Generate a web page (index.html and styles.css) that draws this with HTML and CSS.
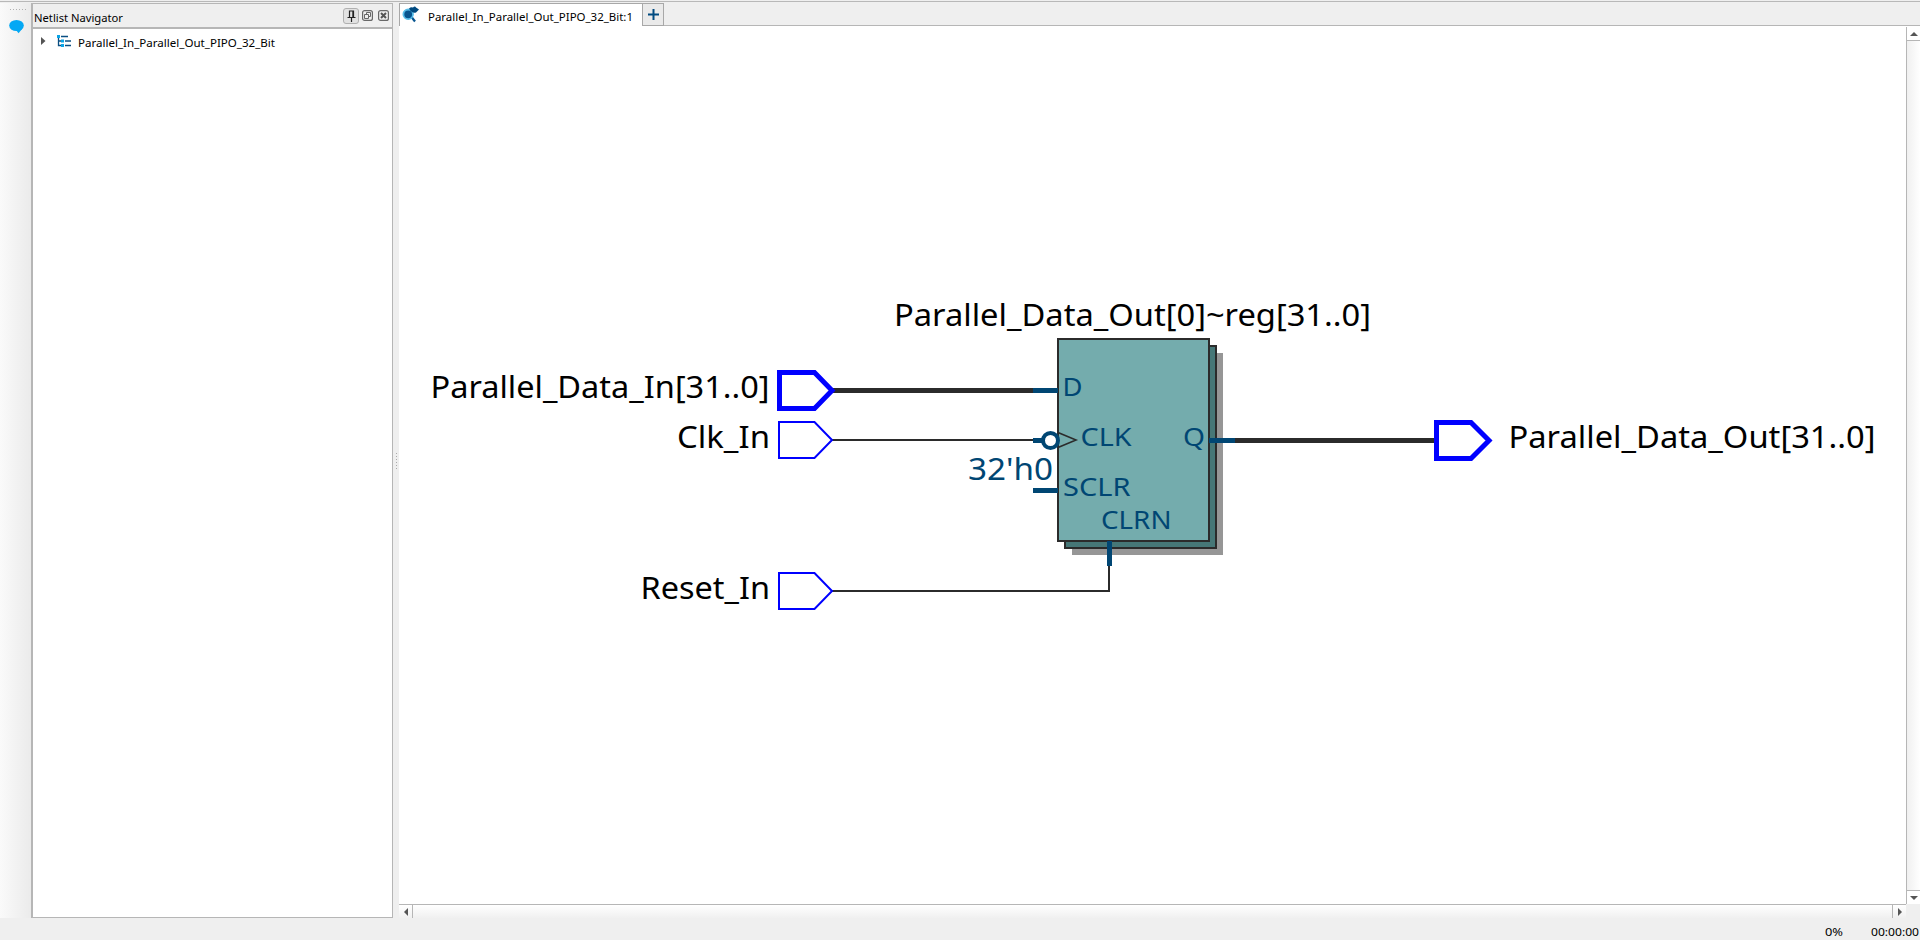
FILE: index.html
```
<!DOCTYPE html>
<html lang="en">
<head>
<meta charset="utf-8">
<title>Netlist Viewer</title>
<link rel="stylesheet" href="styles.css">
</head>
<body>
<div class="app">
  <div class="topline"></div>
  <div class="main">
    <aside class="toolbar">
      <div class="grip"></div>
      <svg class="bubble" width="16" height="14" viewBox="0 0 16 14"><ellipse cx="7.5" cy="5.5" rx="7.3" ry="5.5" fill="#04a8f4"/><path d="M7 10 L9.5 13.3 L13.5 8.5Z" fill="#04a8f4"/></svg>
    </aside>
    <section class="panel">
      <header class="panel-head">
        <span class="panel-title"><svg width="96" height="22"><text x="1" y="16.5" textLength="89" lengthAdjust="spacingAndGlyphs">Netlist Navigator</text></svg></span>
        <span class="pin-btn"><svg width="9" height="12" viewBox="0 0 9 12"><path d="M2.5 7V1H6.5V7M0.5 7.5H8.5M4.5 8V12M5.9 1V7" fill="none" stroke="#222" stroke-width="1.2"/></svg></span>
        <svg class="head-icon" width="11" height="11" viewBox="0 0 11 11"><rect x=".6" y=".6" width="9.8" height="9.8" rx="2" fill="none" stroke="#686868" stroke-width="1.2"/><path d="M4.5 4V2.5H8.5V6.5H7M2.5 4.5H6.5V8.5H2.5Z" fill="none" stroke="#686868"/></svg>
        <svg class="head-icon" width="11" height="11" viewBox="0 0 11 11"><rect x=".6" y=".6" width="9.8" height="9.8" rx="2" fill="none" stroke="#686868" stroke-width="1.2"/><path d="M3 3L8 8M8 3L3 8" stroke="#555" stroke-width="2"/></svg>
      </header>
      <div class="tree-row">
        <svg class="arrow" width="5" height="8" viewBox="0 0 5 8"><path d="M0 0L4.5 4L0 8Z" fill="#555"/></svg>
        <svg class="tree-icon" width="15" height="12" viewBox="0 0 15 12"><path d="M1.5 2V10.5H5M1.5 6H5M4 1.5H11M8 6H14M8 10.5H14" fill="none" stroke="#0a4f83" stroke-width="1.3"/><path d="M0 0H3V3H0ZM4 4.5H7V7.5H4ZM4 9H7V12H4Z" fill="#0aa4e6"/></svg>
        <svg width="204" height="24"><text x="0" y="17.5" textLength="197" lengthAdjust="spacingAndGlyphs">Parallel_In_Parallel_Out_PIPO_32_Bit</text></svg>
      </div>
    </section>
    <div class="splitter"><i></i><i></i><i></i><i></i><i></i><i></i></div>
    <section class="view">
      <nav class="tabs">
        <div class="tab">
          <svg class="tab-icon" width="18" height="18" viewBox="0 0 18 18"><path d="M9.5 12L13 16.5" stroke="#07558f" stroke-width="2.2"/><circle cx="6.2" cy="9.3" r="4.8" fill="#07558f" stroke="#56bce8" stroke-width="1.8"/><path d="M7 3.5Q9 1.6 11 2.6Q13 .6 14 2.6L17 4.6L14 7.6Q10 8.8 7 3.5Z" fill="#004a80"/></svg>
          <svg width="212" height="22"><text x="1" y="16.5" textLength="205" lengthAdjust="spacingAndGlyphs">Parallel_In_Parallel_Out_PIPO_32_Bit:1</text></svg>
        </div>
        <div class="tab-add"><svg width="11" height="11" viewBox="0 0 11 11"><path d="M5.5 0V11M0 5.5H11" stroke="#004a80" stroke-width="2"/></svg></div>
        <div class="tab-rest"></div>
      </nav>
      <div class="work">
        <svg class="canvas" width="1507" height="878" viewBox="399 26 1507 878">
          <rect class="shadow" x="1072" y="353" width="151" height="202"/>
          <rect class="back" x="1065" y="346" width="151" height="202"/>
          <rect class="block" x="1058" y="339" width="151" height="202"/>
          <g class="bus"><path d="M832 390.5H1034M1234 440.5H1436"/></g>
          <g class="wire"><path d="M832 440H1034M832 591H1109V565"/><path class="clock" d="M1058 432.5L1076 440L1058 447.5"/></g>
          <g class="stub"><path d="M1033 390.5H1058M1033 440.5H1043M1033 490.5H1058M1209 440.5H1235M1109.5 541V566"/><circle cx="1050.5" cy="440.5" r="7.5"/></g>
          <g class="port thick"><path d="M779.5 372.5H814.5L832 390.5L814.5 408.5H779.5Z"/><path d="M1436.5 422.5H1471L1489 440.5L1471 458.5H1436.5Z"/></g>
          <g class="port"><path d="M779 422H814.5L832 440L814.5 458H779Z"/><path d="M779 573H814.5L832 591L814.5 609H779Z"/></g>
          <g class="label">
            <text x="430.5" y="398" textLength="339" lengthAdjust="spacingAndGlyphs">Parallel_Data_In[31..0]</text>
            <text x="677" y="448" textLength="93" lengthAdjust="spacingAndGlyphs">Clk_In</text>
            <text x="640.5" y="599" textLength="129.5" lengthAdjust="spacingAndGlyphs">Reset_In</text>
            <text x="894" y="326" textLength="477" lengthAdjust="spacingAndGlyphs">Parallel_Data_Out[0]~reg[31..0]</text>
            <text x="1508.5" y="448" textLength="367" lengthAdjust="spacingAndGlyphs">Parallel_Data_Out[31..0]</text>
            <text class="const" x="968" y="480" textLength="85" lengthAdjust="spacingAndGlyphs">32'h0</text>
          </g>
          <g class="pin">
            <text x="1062.5" y="396" textLength="20" lengthAdjust="spacingAndGlyphs">D</text>
            <text x="1080.5" y="446" textLength="51" lengthAdjust="spacingAndGlyphs">CLK</text>
            <text x="1183" y="446" textLength="22" lengthAdjust="spacingAndGlyphs">Q</text>
            <text x="1063" y="496" textLength="67.5" lengthAdjust="spacingAndGlyphs">SCLR</text>
            <text x="1101" y="529" textLength="70.5" lengthAdjust="spacingAndGlyphs">CLRN</text>
          </g>
        </svg>
        <div class="vscroll">
          <div class="vbtn"><svg width="8" height="4" viewBox="0 0 8 4"><path d="M0 4L4 0L8 4Z" fill="#555"/></svg></div>
          <div class="vbtn low"><svg width="8" height="4" viewBox="0 0 8 4"><path d="M0 0L4 4L8 0Z" fill="#555"/></svg></div>
        </div>
      </div>
      <div class="hscroll">
        <div class="hbtn"><svg width="4" height="8" viewBox="0 0 4 8"><path d="M4 0L0 4L4 8Z" fill="#555"/></svg></div>
        <div class="hbtn right"><svg width="4" height="8" viewBox="0 0 4 8"><path d="M0 0L4 4L0 8Z" fill="#555"/></svg></div>
      </div>
    </section>
  </div>
  <footer class="status">
    <svg width="20" height="22"><text x="0" y="18" textLength="18" lengthAdjust="spacingAndGlyphs">0%</text></svg>
    <svg width="49" height="22"><text x="0" y="18" textLength="48" lengthAdjust="spacingAndGlyphs">00:00:00</text></svg>
  </footer>
</div>
</body>
</html>
```

FILE: styles.css
```
* { box-sizing: border-box; }
body { margin: 0; background: #efefef; font-family: "Noto Sans", "Open Sans", sans-serif; font-size: 11.5px; color: #000; overflow: hidden; }
svg { display: block; flex: none; overflow: visible; }
.app { width: 1920px; height: 940px; display: flex; flex-direction: column; }
.topline { height: 3px; flex: none; background: linear-gradient(#efefef 1px, #b8b8b8 1px, #b8b8b8 2px, #efefef 2px); }
.main { display: flex; height: 915px; flex: none; }
.toolbar { width: 31px; background: linear-gradient(90deg, #fafafa, #ebebeb); padding: 5px 0 0 9px; }
.grip { width: 17px; height: 4px; background: radial-gradient(circle, #b0b0b0 35%, transparent 45%) 0 0 / 3px 3px; margin-bottom: 8px; }
.panel { width: 362px; background: #fff; border: 1px solid #b6b6b6; border-left-width: 2px; }
.panel-head { height: 25px; display: flex; align-items: center; background: #efefef; border-bottom: 2px solid #b6b6b6; padding: 0 3px 0 0; gap: 5px; }
.panel-title { flex: 1; }
.pin-btn { width: 16px; height: 16px; border: 1px solid #b0b0b0; border-radius: 3px; background: #e2e2e2; display: flex; align-items: center; justify-content: center; margin-right: -2px; }
.tree-row { display: flex; align-items: center; height: 24px; padding-left: 8px; }
.tree-icon { margin: 0 6px 0 11px; }
.splitter { width: 6px; background: #efefef; display: flex; flex-direction: column; justify-content: center; align-items: center; gap: 2px; }
.splitter i { width: 1px; height: 1px; background: #aaa; }
.view { width: 1521px; display: flex; flex-direction: column; }
.tabs { height: 23px; flex: none; display: flex; }
.tab { width: 244px; height: 24px; background: #fff; border: 1px solid #a8a8a8; display: flex; align-items: center; padding-left: 2px; }
.tab-icon { margin-right: 7px; align-self: flex-start; margin-top: 1px; }
.tab-add { width: 21px; background: #eaeaea; border: 1px solid #a8a8a8; border-left: 0; display: flex; align-items: center; justify-content: center; }
.tab-rest { flex: 1; border-bottom: 1px solid #b6b6b6; }
.work { height: 878px; display: flex; background: #fff; }
.canvas { position: relative; z-index: 0; clip-path: inset(1px 0 0 0); }
.vscroll { width: 14px; border-left: 1px solid #b6b6b6; background: linear-gradient(90deg, #f0f0f0, #fff); display: flex; flex-direction: column; justify-content: space-between; margin-top: 1px; }
.vbtn { height: 14px; border-bottom: 1px solid #b6b6b6; display: flex; align-items: center; justify-content: center; background: #fff; }
.vbtn.low { border-bottom: 0; border-top: 1px solid #b6b6b6; }
.hscroll { height: 14px; width: 1507px; border-top: 1px solid #b6b6b6; background: linear-gradient(#fff, #f0f0f0); display: flex; justify-content: space-between; }
.hbtn { width: 14px; border-right: 1px solid #b6b6b6; display: flex; align-items: center; justify-content: center; }
.hbtn.right { border-right: 0; border-left: 1px solid #b6b6b6; }
.status { height: 22px; display: flex; justify-content: flex-end; gap: 26px; }
.shadow { fill: #969696; }
.back { fill: #467777; stroke: #2b2b2b; stroke-width: 2; }
.block { fill: #74acad; stroke: #2b2b2b; stroke-width: 2; }
.bus { fill: none; stroke: #2b2b2b; stroke-width: 5; }
.wire { fill: none; stroke: #2b2b2b; stroke-width: 2; }
.clock { stroke-width: 1.6; }
.stub { fill: none; stroke: #004673; stroke-width: 5; }
.stub circle { fill: #fff; stroke-width: 4; }
.port { fill: #fff; stroke: #00f; stroke-width: 2; }
.thick { stroke-width: 5; }
.label { font-size: 31.5px; }
.const { fill: #004673; }
.pin { font-size: 26px; fill: #004673; }
```
